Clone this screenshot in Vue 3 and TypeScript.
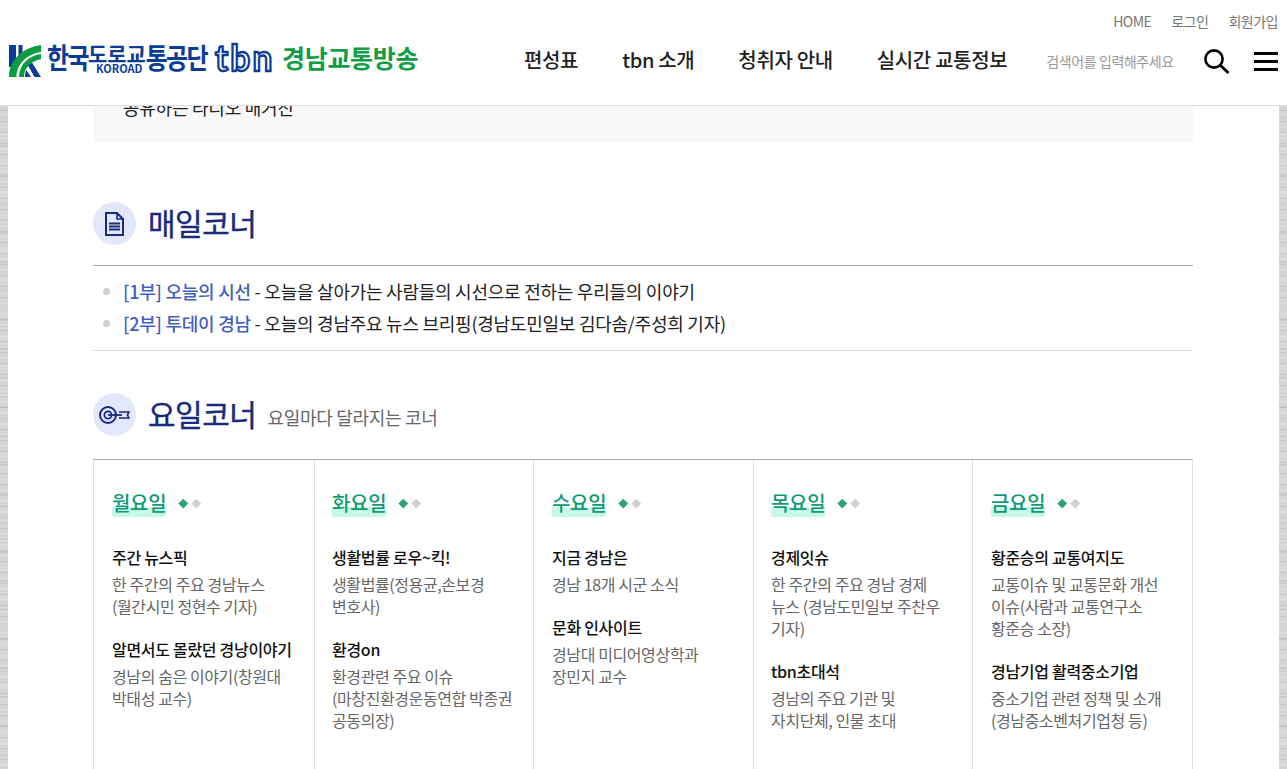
<script setup lang="ts">
type Corner = { title: string; lines: string[] }
type Day = { name: string; corners: Corner[] }

const gnb = ['편성표', 'tbn 소개', '청취자 안내', '실시간 교통정보']

const daily = [
  { label: '[1부] 오늘의 시선', text: ' - 오늘을 살아가는 사람들의 시선으로 전하는 우리들의 이야기' },
  { label: '[2부] 투데이 경남', text: ' - 오늘의 경남주요 뉴스 브리핑(경남도민일보 김다솜/주성희 기자)' }
]

const days: Day[] = [
  {
    name: '월요일',
    corners: [
      { title: '주간 뉴스픽', lines: ['한 주간의 주요 경남뉴스', '(월간시민 정현수 기자)'] },
      { title: '알면서도 몰랐던 경낭이야기', lines: ['경남의 숨은 이야기(창원대', '박태성 교수)'] }
    ]
  },
  {
    name: '화요일',
    corners: [
      { title: '생활법률 로우~킥!', lines: ['생활법률(정용균,손보경', '변호사)'] },
      { title: '환경on', lines: ['환경관련 주요 이슈', '(마창진환경운동연합 박종권', '공동의장)'] }
    ]
  },
  {
    name: '수요일',
    corners: [
      { title: '지금 경남은', lines: ['경남 18개 시군 소식'] },
      { title: '문화 인사이트', lines: ['경남대 미디어영상학과', '장민지 교수'] }
    ]
  },
  {
    name: '목요일',
    corners: [
      { title: '경제잇슈', lines: ['한 주간의 주요 경남 경제', '뉴스 (경남도민일보 주찬우', '기자)'] },
      { title: 'tbn초대석', lines: ['경남의 주요 기관 및', '자치단체, 인물 초대'] }
    ]
  },
  {
    name: '금요일',
    corners: [
      { title: '황준승의 교통여지도', lines: ['교통이슈 및 교통문화 개선', '이슈(사람과 교통연구소', '황준승 소장)'] },
      { title: '경남기업 활력중소기업', lines: ['중소기업 관련 정책 및 소개', '(경남중소벤처기업청 등)'] }
    ]
  }
]
</script>

<template>
  <div class="page">
    <header class="site-header">
      <div class="util">
        <a>HOME</a>
        <a>로그인</a>
        <a>회원가입</a>
      </div>
      <div class="header-main">
        <div class="logo">
          <svg class="logo-mark" width="32" height="32" viewBox="0 0 32 32">
            <rect x="0" y="0" width="7" height="22" fill="#0d3c97" />
            <path d="M9.5 0h4v12l-4 5z" fill="#0d3c97" />
            <path d="M0 32C0 16 12 3 32 0v7C18 9 7.5 19 7.5 32z" fill="#0a9c3f" />
            <path d="M10 32C10 20 19 11 32 9v5C22 16 15 23 15 32z" fill="#0a9c3f" />
            <path d="M19 20.5l4-3L32 32h-6.5zM16 32c0-2 .4-5 1.3-7l4.7 7z" fill="#0d3c97" />
          </svg>
          <span class="logo-org"><span class="tall">한국</span><span class="short">도로교</span><span class="tall">통공단</span><em>KOROAD</em></span>
          <span class="logo-tbn">tbn</span>
          <span class="logo-local">경남교통방송</span>
        </div>
        <nav class="gnb">
          <a v-for="item in gnb" :key="item">{{ item }}</a>
        </nav>
        <span class="search-hint">검색어를 입력해주세요</span>
        <svg class="icon-search" width="27" height="27" viewBox="0 0 27 27">
          <circle cx="11" cy="11" r="8.6" fill="none" stroke="#000" stroke-width="2.6" />
          <path d="M17 17l8.5 8" stroke="#000" stroke-width="3" fill="none" />
        </svg>
        <div class="icon-menu"><i></i><i></i><i></i></div>
      </div>
    </header>

    <main class="content">
      <div class="intro">공유하는 라디오 매거진</div>

      <div class="section-head daily-head">
        <span class="round-icon">
          <svg width="19" height="24" viewBox="0 0 19 24">
            <path d="M1 1h11l6 6v16H1z" fill="none" stroke="#1a2a7c" stroke-width="2" />
            <path d="M12 1v6h6" fill="none" stroke="#1a2a7c" stroke-width="1.6" />
            <path d="M4 11.5h11M4 14.5h11M4 17.5h11" stroke="#1a2a7c" stroke-width="1.8" />
          </svg>
        </span>
        <h2>매일코너</h2>
      </div>
      <ul class="daily-list">
        <li v-for="row in daily" :key="row.label">
          <b>{{ row.label }}</b>{{ row.text }}
        </li>
      </ul>

      <div class="section-head weekly-head">
        <span class="round-icon">
          <svg width="31" height="18" viewBox="0 0 31 18">
            <circle cx="9" cy="9" r="8" fill="none" stroke="#1a2a7c" stroke-width="2" />
            <circle cx="9" cy="9" r="3.6" fill="none" stroke="#1a2a7c" stroke-width="1.8" />
            <path d="M9 9h14" stroke="#1a2a7c" stroke-width="1.8" />
            <path d="M20 6h10l-1.6 3 1.6 3H20" fill="none" stroke="#1a2a7c" stroke-width="1.6" />
          </svg>
        </span>
        <h2>요일코너</h2>
        <span class="section-sub">요일마다 달라지는 코너</span>
      </div>

      <div class="week-grid">
        <section v-for="day in days" :key="day.name" class="day-col">
          <div class="day-title">
            <h3>{{ day.name }}</h3>
            <span class="dots"><i class="on"></i><i></i></span>
          </div>
          <div v-for="corner in day.corners" :key="corner.title" class="corner">
            <h4>{{ corner.title }}</h4>
            <p v-for="line in corner.lines" :key="line">{{ line }}</p>
          </div>
        </section>
      </div>
    </main>
  </div>
</template>

<style>
html,
body {
  margin: 0;
  height: 100%;
  overflow: hidden;
  background-color: #d6d6d6;
  background-image:
    repeating-linear-gradient(180deg, rgba(0, 0, 0, 0.06) 0 1px, transparent 1px 5px, rgba(255, 255, 255, 0.12) 5px 7px, transparent 7px 11px),
    repeating-linear-gradient(180deg, rgba(0, 0, 0, 0.05) 0 2px, transparent 2px 17px, rgba(255, 255, 255, 0.1) 17px 20px, transparent 20px 29px);
}
</style>

<style scoped>
.page {
  height: 769px;
  overflow: hidden;
  font-family: "Noto Sans CJK KR", "Noto Sans", sans-serif;
  color: #222;
}

a {
  color: inherit;
  text-decoration: none;
}

.site-header {
  position: fixed;
  top: 0;
  left: 0;
  right: 0;
  z-index: 10;
  height: 105px;
  background: #fff;
  border-bottom: 1px solid #ddd;
  padding: 0 9px;
}

.util {
  display: flex;
  justify-content: flex-end;
  gap: 20px;
  padding-top: 11px;
  font-size: 14px;
  line-height: 20px;
  letter-spacing: -0.5px;
  color: #777;
}

.header-main {
  display: flex;
  align-items: center;
  height: 42px;
  margin-top: 9px;
}

.logo {
  display: flex;
  align-items: center;
  height: 42px;
  width: 515px;
  padding-bottom: 8px;
  box-sizing: border-box;
}

.logo-mark {
  flex: none;
  margin-top: 8px;
}

.logo-org {
  position: relative;
  display: flex;
  align-items: flex-start;
  height: 32px;
  margin-left: 6px;
  width: 160px;
  font-size: 24px;
  font-weight: 700;
  line-height: 28px;
  letter-spacing: -1.6px;
  color: #0d3c97;
  white-space: nowrap;
}

.logo-org .tall {
  display: block;
  transform: scaleY(1.18);
  transform-origin: top;
}

.logo-org .short {
  display: block;
  margin-top: 2px;
  font-size: 21px;
  line-height: 20px;
  letter-spacing: -0.1px;
}

.logo-org em {
  position: absolute;
  left: 49px;
  top: 23px;
  font-size: 11px;
  font-style: normal;
  line-height: 9px;
  letter-spacing: 0;
}

.logo-tbn {
  margin-left: 8px;
  width: 60px;
  font-family: "Lato", sans-serif;
  font-size: 32px;
  font-weight: 700;
  line-height: 32px;
  letter-spacing: 2px;
  color: #fff;
  -webkit-text-stroke: 2px #0d3c97;
  transform: scale(1.1, 1.15);
  transform-origin: left;
}

.logo-local {
  margin-left: 7px;
  font-size: 25px;
  font-weight: 700;
  line-height: 32px;
  letter-spacing: -0.3px;
  color: #0f9d46;
  white-space: nowrap;
}

.gnb {
  display: flex;
  gap: 44px;
  padding-bottom: 4px;
  font-size: 20px;
  font-weight: 500;
  letter-spacing: -0.35px;
  color: #222;
  white-space: nowrap;
}

.search-hint {
  margin-left: 39px;
  font-size: 14px;
  letter-spacing: -0.4px;
  color: #999;
  white-space: nowrap;
}

.icon-search {
  margin-left: 29px;
  flex: none;
}

.icon-menu {
  margin-left: 24px;
  width: 24px;
  display: flex;
  flex-direction: column;
  gap: 5px;
}

.icon-menu i {
  display: block;
  height: 3px;
  background: #000;
}

.content {
  height: 769px;
  box-sizing: border-box;
  margin: 0 8px;
  padding: 0 86px 0 85px;
  background: #fff;
}

.intro {
  height: 142px;
  box-sizing: border-box;
  padding: 94px 0 0 30px;
  background: #f8f8f8;
  font-size: 18px;
  line-height: 26px;
  letter-spacing: -0.25px;
  color: #222;
}

.section-head {
  display: flex;
  align-items: center;
}

.daily-head {
  margin-top: 60px;
}

.weekly-head {
  margin-top: 42px;
}

.round-icon {
  flex: none;
  width: 43px;
  height: 43px;
  border-radius: 50%;
  background: #e3e7fb;
  display: flex;
  align-items: center;
  justify-content: center;
}

.section-head h2 {
  margin: -2px 0 0 12px;
  font-size: 30px;
  font-weight: 400;
  line-height: 43px;
  letter-spacing: -0.5px;
  color: #1a2a7c;
  -webkit-text-stroke: 0.4px #1a2a7c;
}

.section-sub {
  margin: 4px 0 0 11px;
  font-size: 18px;
  color: #666;
  letter-spacing: -0.3px;
}

.daily-list {
  list-style: none;
  margin: 20px 0 0;
  padding: 9px 0 11px 30px;
  border-top: 1px solid #aaa;
  border-bottom: 1px solid #ddd;
  font-size: 18px;
  line-height: 32px;
  letter-spacing: -0.25px;
  color: #222;
}

.daily-list li {
  position: relative;
}

.daily-list li::before {
  content: "";
  position: absolute;
  left: -20px;
  top: 13px;
  width: 7px;
  height: 7px;
  border-radius: 50%;
  background: #d0d0d0;
}

.daily-list b {
  font-weight: 500;
  color: #3f5fc0;
}

.week-grid {
  display: grid;
  grid-template-columns: 221px 219px 220px 219px 1fr;
  margin-top: 23px;
  height: 320px;
  border-top: 1px solid #aaa;
  border-right: 1px solid #ddd;
}

.day-col {
  box-sizing: border-box;
  padding: 28px 12px 0 18px;
  border-left: 1px solid #ddd;
}

.day-col:nth-child(even) {
  padding-left: 17px;
}

.day-title {
  display: flex;
  align-items: center;
  height: 30px;
  margin-bottom: 27px;
}

.day-title h3 {
  margin: 0;
  font-size: 20px;
  font-weight: 500;
  line-height: 30px;
  letter-spacing: -0.3px;
  color: #0f9a76;
  background: linear-gradient(180deg, transparent 63%, #c8f8e8 63%, #c8f8e8 97%, transparent 97%);
  border-radius: 4px;
}

.dots {
  display: flex;
  gap: 6px;
  margin-left: 14px;
}

.dots i {
  width: 6.5px;
  height: 6.5px;
  transform: rotate(45deg);
  background: #d0d0d0;
}

.dots i.on {
  background: #2ca27e;
}

.corner {
  margin-bottom: 20px;
}

.corner h4 {
  margin: 0 0 4px;
  font-size: 16px;
  font-weight: 500;
  line-height: 24px;
  letter-spacing: -0.3px;
  color: #111;
}

.corner p {
  margin: 0;
  font-size: 16px;
  line-height: 22px;
  letter-spacing: -0.4px;
  color: #666;
  white-space: nowrap;
}
</style>
